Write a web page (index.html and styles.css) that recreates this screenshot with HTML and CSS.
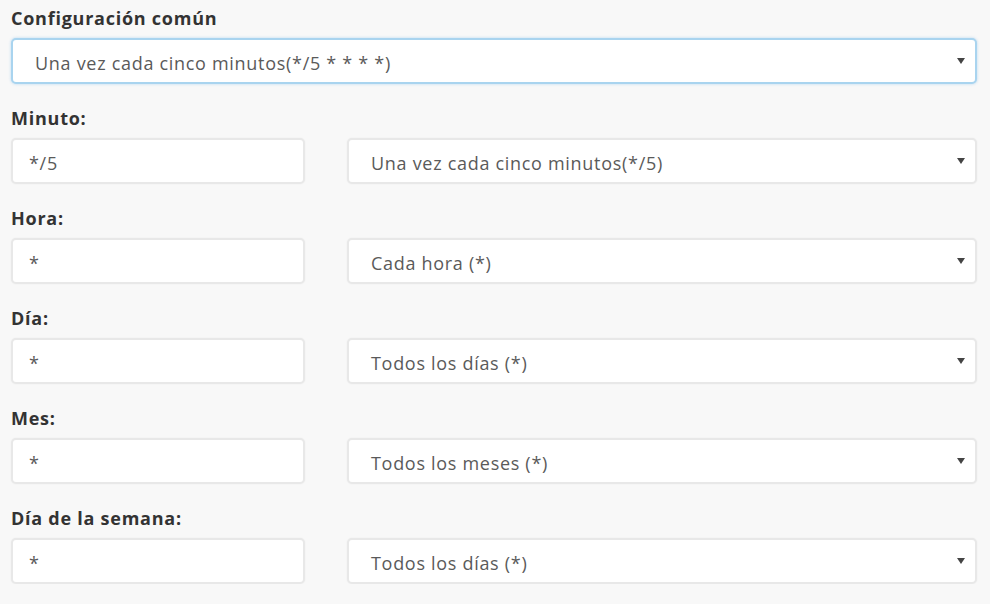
FILE: index.html
```html
<!DOCTYPE html>
<html lang="es">
<head>
<meta charset="utf-8">
<title>Configuración cron</title>
<link rel="stylesheet" href="styles.css">
</head>
<body>
<div class="form">
  <div class="group">
    <div class="label">Configuración común</div>
    <div class="control select focus">
      <span class="value">Una vez cada cinco minutos(*/5 * * * *)</span>
      <svg class="caret" width="8" height="6" viewBox="0 0 8 6"><path d="M0 0H8L4 6Z"/></svg>
    </div>
  </div>
  <div class="group">
    <div class="label">Minuto:</div>
    <div class="row">
      <div class="control input"><span class="value">*/5</span></div>
      <div class="control select">
        <span class="value">Una vez cada cinco minutos(*/5)</span>
        <svg class="caret" width="8" height="6" viewBox="0 0 8 6"><path d="M0 0H8L4 6Z"/></svg>
      </div>
    </div>
  </div>
  <div class="group">
    <div class="label">Hora:</div>
    <div class="row">
      <div class="control input"><span class="value">*</span></div>
      <div class="control select">
        <span class="value">Cada hora (*)</span>
        <svg class="caret" width="8" height="6" viewBox="0 0 8 6"><path d="M0 0H8L4 6Z"/></svg>
      </div>
    </div>
  </div>
  <div class="group">
    <div class="label">Día:</div>
    <div class="row">
      <div class="control input"><span class="value">*</span></div>
      <div class="control select">
        <span class="value">Todos los días (*)</span>
        <svg class="caret" width="8" height="6" viewBox="0 0 8 6"><path d="M0 0H8L4 6Z"/></svg>
      </div>
    </div>
  </div>
  <div class="group">
    <div class="label">Mes:</div>
    <div class="row">
      <div class="control input"><span class="value">*</span></div>
      <div class="control select">
        <span class="value">Todos los meses (*)</span>
        <svg class="caret" width="8" height="6" viewBox="0 0 8 6"><path d="M0 0H8L4 6Z"/></svg>
      </div>
    </div>
  </div>
  <div class="group">
    <div class="label">Día de la semana:</div>
    <div class="row">
      <div class="control input"><span class="value">*</span></div>
      <div class="control select">
        <span class="value">Todos los días (*)</span>
        <svg class="caret" width="8" height="6" viewBox="0 0 8 6"><path d="M0 0H8L4 6Z"/></svg>
      </div>
    </div>
  </div>
</div>
</body>
</html>
```
FILE: styles.css
```css
html, body {
  margin: 0;
  padding: 0;
  background: #f8f8f8;
}
body {
  font-family: "Open Sans", "Liberation Sans", sans-serif;
  color: #333;
}
.form {
  padding: 8px 13px 0 11px;
  display: flex;
  flex-direction: column;
  gap: 24px;
}
.label {
  font-size: 18px;
  font-weight: 700;
  letter-spacing: 0.75px;
  line-height: 20px;
  height: 20px;
  margin-bottom: 10px;
  color: #333;
}
.row {
  display: grid;
  grid-template-columns: 294px 1fr;
  column-gap: 42px;
}
.control {
  box-sizing: border-box;
  height: 46px;
  background: #fff;
  border: 2px solid #e8e8e8;
  border-radius: 5px;
  box-shadow: 0 0 2px rgba(0, 0, 0, 0.06);
  display: flex;
  align-items: center;
  font-size: 18px;
  letter-spacing: 0.7px;
  color: #5a5a5a;
}
.value {
  padding-top: 3px;
}
.input {
  padding-left: 16px;
}
.select {
  padding-left: 22px;
  padding-right: 10px;
  justify-content: space-between;
}
.select.focus {
  border-color: #a9d4ef;
  box-shadow: 0 0 3px rgba(102, 175, 233, 0.45);
}
.caret {
  fill: #444;
}
```
